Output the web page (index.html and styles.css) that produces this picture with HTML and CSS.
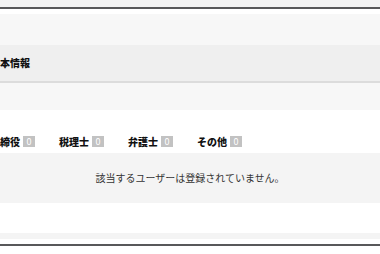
FILE: index.html
```html
<!DOCTYPE html>
<html lang="ja">
<head>
  <meta charset="UTF-8">
  <meta name="viewport" content="width=device-width, initial-scale=1.0">
  <title>基本情報</title>
  <link rel="stylesheet" href="styles.css">
</head>
<body>
  <div class="top-strip"></div>
  <div class="frame">
    <div class="band band-top"></div>
    <div class="panel-heading">基本情報</div>
    <div class="band band-sub"></div>

    <div class="tabs">
      <span class="tab">取締役 <span class="badge">0</span></span>
      <span class="tab">税理士 <span class="badge">0</span></span>
      <span class="tab">弁護士 <span class="badge">0</span></span>
      <span class="tab">その他 <span class="badge">0</span></span>
    </div>

    <div class="empty-box">該当するユーザーは登録されていません。</div>

    <div class="band band-foot"></div>
  </div>
</body>
</html>
```

FILE: styles.css
```css
body {
  margin: 0;
  padding: 0;
  font-family: "Noto Sans CJK JP", "Noto Sans", sans-serif;
  background-color: #fff;
  color: #222;
  overflow: hidden;
}

.top-strip {
  height: 7px;
  background-color: #f3f3f3;
}

.frame {
  margin: 0 -10px;
  padding-top: 5px;
  padding-bottom: 5px;
  border-top: 2px solid #58585a;
  border-bottom: 2px solid #58585a;
}

.band {
  background-color: #f7f7f7;
}

.band-top {
  height: 31px;
}

.band-sub {
  height: 27px;
}

.band-foot {
  height: 6px;
  background-color: #f4f4f4;
}

.panel-heading {
  height: 36px;
  line-height: 36px;
  font-size: 10px;
  font-weight: 900;
  color: #111;
  background-color: #efefef;
  border-bottom: 2px solid #dcdcdc;
}

.tabs {
  display: flex;
  gap: 24px;
  align-items: center;
  height: 14px;
  margin-top: 24px;
  margin-bottom: 5px;
  font-size: 10px;
  font-weight: 900;
  color: #111;
}

.tab {
  display: flex;
  align-items: center;
  gap: 3px;
  white-space: nowrap;
}

.badge {
  display: inline-block;
  width: 12px;
  height: 11px;
  line-height: 11px;
  text-align: center;
  font-size: 9px;
  font-weight: normal;
  color: #fff;
  background-color: #c2c2c2;
}

.empty-box {
  height: 50px;
  line-height: 50px;
  margin-bottom: 30px;
  text-align: center;
  font-size: 10px;
  color: #333;
  background-color: #f4f4f4;
}
```
